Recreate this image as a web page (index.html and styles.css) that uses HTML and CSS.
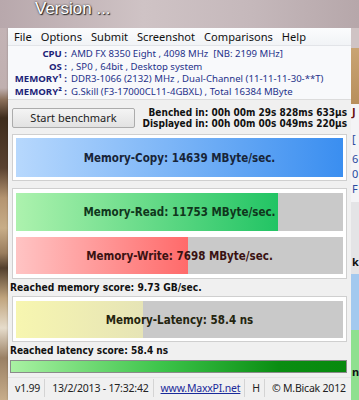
FILE: index.html
```html
<!DOCTYPE html>
<html lang="en">
<head>
    <meta charset="UTF-8">
    <title>MaxxMEM2 - Memory Benchmark</title>
    <link rel="stylesheet" href="styles.css">
</head>
<body>
  <div class="desk">
    <div class="caption">Version ...</div>
    <div class="scene">
      <div class="edge-left"></div>

      <div class="window">
        <ul class="menu">
          <li>File</li>
          <li>Options</li>
          <li>Submit</li>
          <li>Screenshot</li>
          <li>Comparisons</li>
          <li>Help</li>
        </ul>

        <div class="info">
          <div class="info-row"><span class="label">CPU :</span><span class="value">AMD FX 8350 Eight , 4098 MHz&nbsp; [NB: 2199 MHz]</span></div>
          <div class="info-row"><span class="label">OS :</span><span class="value">, SP0 , 64bit , Desktop system</span></div>
          <div class="info-row"><span class="label">MEMORY¹ :</span><span class="value">DDR3-1066 (2132) MHz , Dual-Channel (11-11-11-30-**T)</span></div>
          <div class="info-row"><span class="label">MEMORY² :</span><span class="value">G.Skill (F3-17000CL11-4GBXL) , Total 16384 MByte</span></div>
        </div>

        <div class="toolbar">
          <button class="start-button">Start benchmark</button>
          <div class="timings">
            <div>Benched in: 00h 00m 29s 828ms 633µs</div>
            <div>Displayed in: 00h 00m 00s 049ms 220µs</div>
          </div>
        </div>

        <div class="panel panel-copy">
          <div class="bar bar-copy">
            <div class="fill" style="width: 100%"></div>
            <span class="bar-text">Memory-Copy: 14639 MByte/sec.</span>
          </div>
        </div>

        <div class="panel panel-rw">
          <div class="bar bar-read">
            <div class="fill" style="width: 80.1%"></div>
            <span class="bar-text">Memory-Read: 11753 MByte/sec.</span>
          </div>
          <div class="bar bar-write">
            <div class="fill" style="width: 52.6%"></div>
            <span class="bar-text">Memory-Write: 7698 MByte/sec.</span>
          </div>
        </div>
        <div class="score">Reached memory score: 9.73 GB/sec.</div>

        <div class="panel panel-latency">
          <div class="bar bar-latency">
            <div class="fill" style="width: 38.8%"></div>
            <span class="bar-text">Memory-Latency: 58.4 ns</span>
          </div>
        </div>
        <div class="score score-small">Reached latency score: 58.4 ns</div>

        <div class="progress"></div>

        <div class="statusbar">
          <span class="cell">v1.99</span>
          <span class="cell">13/2/2013 - 17:32:42</span>
          <span class="cell"><a href="#" class="site-link">www.MaxxPI.net</a></span>
          <span class="cell">H</span>
          <span class="cell cell-last">© M.Bicak 2012</span>
          <span class="grip"></span>
        </div>
      </div>

      <div class="edge-right">
        <div class="strip strip-pink"></div>
        <div class="strip strip-tan"></div>
        <div class="strip strip-white">
          <span class="glyph glyph-red">J</span>
          <span class="glyph glyph-first">[</span>
          <span class="glyph glyph-gap">6</span>
          <span class="glyph">0</span>
          <span class="glyph">F</span>
        </div>
        <div class="strip strip-grey"><span class="glyph glyph-dark">k</span></div>
        <div class="strip strip-blue"></div>
        <div class="strip strip-green"><span class="glyph glyph-dark">n</span></div>
      </div>
    </div>
  </div>
</body>
</html>
```

FILE: styles.css
```css
body {
    margin: 0;
    padding: 0;
    width: 359px;
    height: 400px;
    overflow: hidden;
    font-family: "Noto Sans", "Liberation Sans", sans-serif;
}

.desk {
    width: 359px;
    height: 400px;
    display: flex;
    flex-direction: column;
}

/* title of the window behind, shown on the wallpaper */
.caption {
    flex: none;
    height: 28px;
    padding-left: 35px;
    font-family: "Liberation Sans", sans-serif;
    font-size: 17px;
    line-height: 18px;
    color: #ffffff;
    text-shadow: 0 0 2px #333333, 1px 1px 1px #222222;
    background: linear-gradient(90deg, #b8a8ac, #cfc3c5 40%, #c5b8bb 70%, #b6a7aa);
}

.scene {
    flex: none;
    height: 372px;
    display: flex;
    overflow: hidden;
}

.edge-left {
    width: 8px;
    background: linear-gradient(180deg,
        #c3b3b5 0px, #c0b0b0 60px, #8a6e58 72px, #3e2c1c 90px, #5a4230 140px,
        #b49470 170px, #c8ad88 200px, #9a7e5e 225px, #53402e 240px, #c0a47e 270px,
        #e6dccb 300px, #9a8064 330px, #c7ad8a 372px);
}

.edge-right {
    width: 8px;
    display: flex;
    flex-direction: column;
    overflow: hidden;
}

.strip {
    display: flex;
    flex-direction: column;
    align-items: flex-start;
    box-sizing: border-box;
    overflow: hidden;
}

.strip-pink  { height: 20px; background: #cfc3c4; }
.strip-tan   { height: 56px; background: linear-gradient(180deg, #c9a473, #b88f5c); }
.strip-white { height: 98px; background: #f4f4f6; padding-top: 2px; gap: 3px; }
.strip-grey  { height: 72px; background: #e4e4e6; justify-content: flex-end; padding-bottom: 6px; }
.strip-blue  { height: 56px; background: #a3c9ef; }
.strip-green { flex: 1; background: #8fe08f; padding-top: 36px; }

.glyph {
    font-size: 11px;
    line-height: 12px;
    color: #2a4aa0;
    padding-left: 1px;
}

.glyph-first { margin-top: 12px; }
.glyph-gap   { margin-top: 5px; }

.glyph-red  { color: #6a1010; font-weight: bold; }
.glyph-dark { color: #111111; font-weight: bold; }

/* main application window */
.window {
    width: 343px;
    display: flex;
    flex-direction: column;
    background: #f0f0f0;
    box-shadow: 0 0 2px rgba(0, 0, 0, 0.25);
}

.menu {
    flex: none;
    list-style: none;
    margin: 0;
    padding: 0 0 0 6px;
    height: 17px;
    display: flex;
    gap: 9px;
    font-size: 11.1px;
    line-height: 18px;
    color: #111111;
    background: linear-gradient(180deg, #fbfcfd, #f1f3f6);
    border-bottom: 1px solid #e2e4e8;
}

.info {
    flex: none;
    padding: 2px 0 1px 0;
    background: #f8f9fb;
    border-bottom: 1px solid #dcdcdc;
}

.info-row {
    display: flex;
    height: 12.5px;
    font-size: 9.6px;
    line-height: 12.5px;
    color: #25318a;
    white-space: nowrap;
}

.label {
    width: 59px;
    text-align: right;
    font-weight: bold;
    color: #1d2378;
    padding-right: 4px;
    flex-shrink: 0;
}

.toolbar {
    flex: none;
    height: 33px;
    box-sizing: border-box;
    display: flex;
    justify-content: space-between;
    align-items: center;
    padding: 2px 4px 0 4px;
}

.start-button {
    width: 123px;
    height: 20px;
    padding: 0;
    font-family: "Noto Sans", "Liberation Sans", sans-serif;
    font-size: 11px;
    color: #222222;
    background: linear-gradient(180deg, #f4f4f4, #e2e2e2);
    border: 1px solid #acacac;
    border-radius: 2px;
}

.timings {
    font-family: "DejaVu Sans Condensed", "DejaVu Sans", sans-serif;
    font-weight: bold;
    font-size: 10px;
    line-height: 11px;
    text-align: right;
    color: #111111;
    white-space: nowrap;
}

.panel {
    flex: none;
    margin: 0 4px;
    padding: 3px;
    background: #ffffff;
    border: 1px solid #cfcfcf;
    display: flex;
    flex-direction: column;
    gap: 6px;
}

.panel-copy {
    margin-top: 1px;
}

.panel-rw {
    margin-top: 7px;
    padding: 4px 3px;
}

.panel-latency {
    padding: 4px 3px 3px 3px;
}

.bar {
    display: grid;
    height: 39px;
    background: #c9c9c9;
}

.bar-read {
    height: 38px;
}

.bar-write,
.bar-latency {
    height: 37px;
}

.fill,
.bar-text {
    grid-area: 1 / 1;
}

.bar-text {
    align-self: center;
    justify-self: center;
    font-family: "DejaVu Sans Condensed", "DejaVu Sans", sans-serif;
    font-weight: bold;
    font-size: 11.5px;
    white-space: nowrap;
}

.bar-copy .fill    { background: linear-gradient(90deg, #b7d8fd, #3a8ef0); }
.bar-copy .bar-text { color: #172438; }

.bar-read .fill    { background: linear-gradient(90deg, #adf2ae, #22c464); }
.bar-read .bar-text { color: #10361c; }

.bar-write .fill   { background: linear-gradient(90deg, #ffc4c4, #ff6a6a); }
.bar-write .bar-text { color: #3a1212; }

.bar-latency .fill { background: linear-gradient(90deg, #f7f6b0, #e6e4b6); }
.bar-latency .bar-text { color: #24240e; }

.score {
    flex: none;
    height: 16px;
    padding: 1px 0 0 2px;
    font-family: "DejaVu Sans Condensed", "DejaVu Sans", sans-serif;
    font-weight: bold;
    font-size: 10.2px;
    line-height: 15px;
    color: #111111;
    white-space: nowrap;
}

.score-small {
    font-size: 10px;
}

.progress {
    flex: none;
    margin: 1px 4px 0 2px;
    height: 11px;
    border: 1px solid #8a8a8a;
    background: linear-gradient(90deg, #a9f1a3, #3cc44a 45%, #0a8d12 80%, #078a0e);
}

.statusbar {
    flex: none;
    margin-top: 4px;
    height: 24px;
    box-sizing: border-box;
    display: flex;
    align-items: center;
    padding: 0 0 4px 0;
    font-size: 10.5px;
    letter-spacing: -0.2px;
    color: #222222;
    white-space: nowrap;
    border-top: 1px solid #e4e4e4;
}

.cell {
    padding: 0 4px 0 5px;
    margin-left: 2px;
    border-right: 1px solid #d4d4d4;
    line-height: 18px;
}

.cell-last {
    border-right: none;
}

.site-link {
    color: #1a2a9a;
}

.grip {
    width: 8px;
    height: 8px;
    margin-left: auto;
    margin-right: 3px;
    align-self: flex-end;
    background: radial-gradient(circle, #9a9a9a 1px, transparent 1px) 0 0 / 3px 3px;
}
```
